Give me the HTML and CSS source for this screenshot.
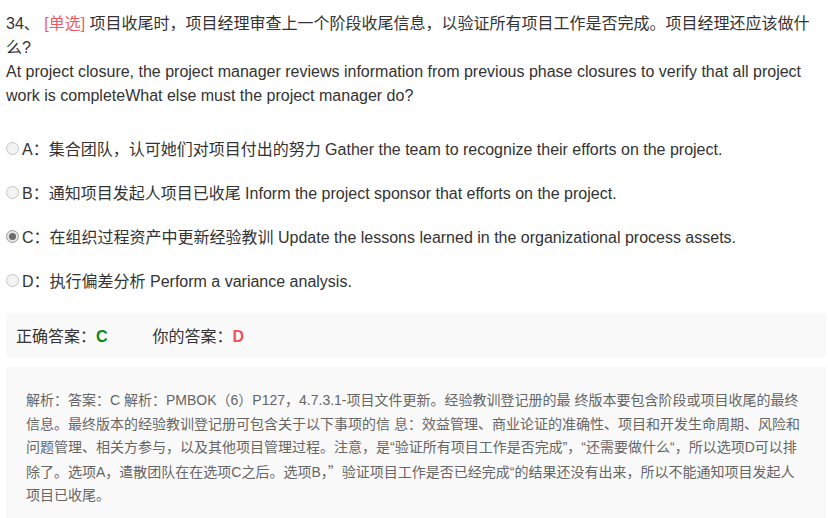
FILE: index.html
```html
<!DOCTYPE html>
<html lang="zh-CN">
<head>
<meta charset="utf-8">
<link rel="stylesheet" href="styles.css">
</head>
<body>
<div class="page">
  <div class="question">
    <div class="stem">34、 <span class="qtype">[单选]</span> 项目收尾时，项目经理审查上一个阶段收尾信息，以验证所有项目工作是否完成。项目经理还应该做什么?</div>
    <div class="stem-en">At project closure, the project manager reviews information from previous phase closures to verify that all project work is completeWhat else must the project manager do?</div>
  </div>
  <ul class="options">
    <li class="option"><span class="radio"></span><span class="opt-text">A：集合团队，认可她们对项目付出的努力 Gather the team to recognize their efforts on the project.</span></li>
    <li class="option"><span class="radio"></span><span class="opt-text">B：通知项目发起人项目已收尾 Inform the project sponsor that efforts on the project.</span></li>
    <li class="option"><span class="radio checked"></span><span class="opt-text">C：在组织过程资产中更新经验教训 Update the lessons learned in the organizational process assets.</span></li>
    <li class="option"><span class="radio"></span><span class="opt-text">D：执行偏差分析 Perform a variance analysis.</span></li>
  </ul>
  <div class="answer-box">
    <span class="ans-item">正确答案：<b class="right">C</b></span>
    <span class="ans-item mine">你的答案：<b class="wrong">D</b></span>
  </div>
  <div class="analysis">解析：答案：C 解析：PMBOK（6）P127，4.7.3.1-项目文件更新。经验教训登记册的最 终版本要包含阶段或项目收尾的最终信息。最终版本的经验教训登记册可包含关于以下事项的信 息：效益管理、商业论证的准确性、项目和开发生命周期、风险和问题管理、相关方参与，以及其他项目管理过程。注意，是“验证所有项目工作是否完成”，“还需要做什么“，所以选项D可以排除了。选项A，遣散团队在在选项C之后。选项B，<span class="wide-quote">”</span>验证项目工作是否已经完成“的结果还没有出来，所以不能通知项目发起人项目已收尾。</div>
</div>
</body>
</html>
```

FILE: styles.css
```css
html, body {
  margin: 0;
  padding: 0;
  background: #ffffff;
}

body {
  font-family: "Liberation Sans", Arial, "Noto Sans CJK SC", sans-serif;
  color: #333333;
}

.page {
  padding: 12px 2px 0 6px;
}

.question {
  font-size: 16px;
  line-height: 24px;
  padding-right: 10px;
}

.qtype {
  color: #f05a64;
}

.options {
  list-style: none;
  margin: 18px 0 0 0;
  padding: 0;
}

.option {
  height: 44px;
  display: flex;
  align-items: center;
  font-size: 16px;
}

.radio {
  width: 11px;
  height: 11px;
  border: 1px solid #c4c4c4;
  border-radius: 50%;
  background: #f3f3f3;
  margin-right: 3px;
  display: flex;
  align-items: center;
  justify-content: center;
  flex: none;
}

.radio.checked {
  border-color: #9a9a9a;
  background: #e6e6e6;
}

.radio.checked::after {
  content: "";
  width: 7px;
  height: 7px;
  border-radius: 50%;
  background: #6b6b6b;
}

.answer-box {
  margin-top: 11px;
  height: 44px;
  padding: 0 10px;
  background: #f9f9f9;
  display: flex;
  align-items: center;
  font-size: 16px;
}

.ans-item b {
  font-weight: bold;
}

.mine {
  margin-left: 45px;
}

.right {
  color: #0a8a1a;
}

.wrong {
  color: #f2505a;
}

.analysis {
  margin-top: 10px;
  padding: 22px 24px 22px 20px;
  background: #f9f9f9;
  font-size: 14px;
  line-height: 23.5px;
  color: #666666;
}

.wide-quote {
  font-family: "Noto Sans CJK SC", sans-serif;
}
```
